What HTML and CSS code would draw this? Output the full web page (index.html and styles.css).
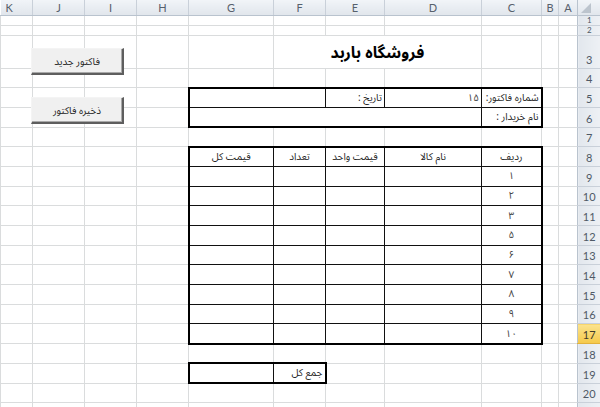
FILE: index.html
```html
<!DOCTYPE html>
<html lang="fa">
<head>
<meta charset="utf-8">
<title>فاکتور فروشگاه باربد</title>
<link rel="stylesheet" href="styles.css">
</head>
<body>
<div class="sheet">
<table class="grid" dir="rtl">
<colgroup>
<col class="c-rh"><col class="c-a"><col class="c-b"><col class="c-c"><col class="c-d"><col class="c-e"><col class="c-f"><col class="c-g"><col class="c-h"><col class="c-i"><col class="c-j"><col class="c-k">
</colgroup>
<thead>
<tr class="hdr">
<th class="corner"><span class="tri"></span></th>
<th>A</th><th>B</th><th>C</th><th>D</th><th>E</th><th>F</th><th>G</th><th>H</th><th>I</th><th>J</th><th class="k">K</th>
</tr>
</thead>
<tbody>
<tr class="r-thin"><th class="rh"><span class="clip">1</span></th><td></td><td></td><td></td><td></td><td></td><td></td><td></td><td></td><td></td><td></td><td></td></tr>
<tr class="r-thin"><th class="rh"><span class="clip">2</span></th><td></td><td></td><td></td><td></td><td></td><td></td><td></td><td></td><td></td><td></td><td></td></tr>
<tr class="r-title"><th class="rh">3</th><td></td><td></td><td></td><td colspan="3" class="title">فروشگاه باربد</td><td></td><td></td><td></td><td></td><td></td></tr>
<tr class="r"><th class="rh">4</th><td></td><td></td><td></td><td></td><td></td><td></td><td></td><td></td><td></td><td></td><td></td></tr>
<tr class="r"><th class="rh">5</th><td></td><td></td><td class="t bt br">شماره فاکتور:</td><td class="t bt num">۱۵</td><td class="t bt">تاریخ :</td><td colspan="2" class="t bt bl"></td><td></td><td></td><td></td><td></td></tr>
<tr class="r"><th class="rh">6</th><td></td><td></td><td class="t bb br">نام خریدار :</td><td colspan="4" class="t bb bl"></td><td></td><td></td><td></td><td></td></tr>
<tr class="r"><th class="rh">7</th><td></td><td></td><td></td><td></td><td></td><td></td><td></td><td></td><td></td><td></td><td></td></tr>
<tr class="r"><th class="rh">8</th><td></td><td></td><td class="t bt br ctr">ردیف</td><td class="t bt ctr">نام کالا</td><td class="t bt ctr">قیمت واحد</td><td class="t bt ctr">تعداد</td><td class="t bt bl ctr">قیمت کل</td><td></td><td></td><td></td><td></td></tr>
<tr class="r"><th class="rh">9</th><td></td><td></td><td class="t br ctr num">۱</td><td class="t"></td><td class="t"></td><td class="t"></td><td class="t bl"></td><td></td><td></td><td></td><td></td></tr>
<tr class="r"><th class="rh">10</th><td></td><td></td><td class="t br ctr num">۲</td><td class="t"></td><td class="t"></td><td class="t"></td><td class="t bl"></td><td></td><td></td><td></td><td></td></tr>
<tr class="r"><th class="rh">11</th><td></td><td></td><td class="t br ctr num">۳</td><td class="t"></td><td class="t"></td><td class="t"></td><td class="t bl"></td><td></td><td></td><td></td><td></td></tr>
<tr class="r"><th class="rh">12</th><td></td><td></td><td class="t br ctr num">۵</td><td class="t"></td><td class="t"></td><td class="t"></td><td class="t bl"></td><td></td><td></td><td></td><td></td></tr>
<tr class="r"><th class="rh">13</th><td></td><td></td><td class="t br ctr num">۶</td><td class="t"></td><td class="t"></td><td class="t"></td><td class="t bl"></td><td></td><td></td><td></td><td></td></tr>
<tr class="r"><th class="rh">14</th><td></td><td></td><td class="t br ctr num">۷</td><td class="t"></td><td class="t"></td><td class="t"></td><td class="t bl"></td><td></td><td></td><td></td><td></td></tr>
<tr class="r"><th class="rh">15</th><td></td><td></td><td class="t br ctr num">۸</td><td class="t"></td><td class="t"></td><td class="t"></td><td class="t bl"></td><td></td><td></td><td></td><td></td></tr>
<tr class="r"><th class="rh">16</th><td></td><td></td><td class="t br ctr num">۹</td><td class="t"></td><td class="t"></td><td class="t"></td><td class="t bl"></td><td></td><td></td><td></td><td></td></tr>
<tr class="r"><th class="rh active">17</th><td></td><td></td><td class="t br bb ctr num">۱۰</td><td class="t bb"></td><td class="t bb"></td><td class="t bb"></td><td class="t bb bl"></td><td></td><td></td><td></td><td></td></tr>
<tr class="r"><th class="rh">18</th><td></td><td></td><td></td><td></td><td></td><td></td><td></td><td></td><td></td><td></td><td></td></tr>
<tr class="r"><th class="rh">19</th><td></td><td></td><td></td><td></td><td></td><td class="t bt bb br">جمع کل</td><td class="t bt bb bl"></td><td></td><td></td><td></td><td></td></tr>
<tr class="r"><th class="rh">20</th><td></td><td></td><td></td><td></td><td></td><td></td><td></td><td></td><td></td><td></td><td></td></tr>
<tr class="r"><th class="rh"></th><td></td><td></td><td></td><td></td><td></td><td></td><td></td><td></td><td></td><td></td><td></td></tr>
</tbody>
</table>
<button class="btn btn-new" type="button">فاکتور جدید</button>
<button class="btn btn-save" type="button">ذخیره فاکتور</button>
</div>
</body>
</html>
```
FILE: styles.css
```css
html, body {
  margin: 0;
  padding: 0;
  background: #ffffff;
}
body {
  width: 600px;
  height: 407px;
  overflow: hidden;
  font-family: "Noto Sans Arabic", "DejaVu Sans", sans-serif;
}
.sheet {
  position: relative;
  width: 600px;
  height: 407px;
  overflow: hidden;
}
.grid {
  border-collapse: collapse;
  table-layout: fixed;
  width: 600px;
}
.c-rh { width: 23px; }
.c-a { width: 19px; }
.c-b { width: 17px; }
.c-c { width: 60px; }
.c-d { width: 97px; }
.c-e { width: 59px; }
.c-f { width: 52px; }
.c-g { width: 85px; }
.c-h { width: 52px; }
.c-i { width: 52px; }
.c-j { width: 52px; }
.c-k { width: 32px; }

.grid td {
  border: 1px solid #dadcdd;
  padding: 0 2px;
  font-size: 10px;
  line-height: 12px;
  color: #262626;
  white-space: nowrap;
  overflow: hidden;
  vertical-align: middle;
  text-align: right;
}

.hdr { height: 15px; }
.r-thin { height: 10px; }
.r-title { height: 33px; }
.r { height: 19.7px; }

.hdr th {
  background: linear-gradient(#f1f4f8, #e1e6ec);
  border-left: 1px solid #c9d0d9;
  border-bottom: 1px solid #b9c3ce;
  font-family: "Lato", "Liberation Sans", sans-serif;
  font-weight: normal;
  font-size: 11px;
  line-height: 13px;
  color: #56606c;
  padding: 0;
  text-align: center;
  vertical-align: middle;
}
.hdr th.k {
  text-align: left;
  padding-left: 5px;
  border-left: none;
}
.hdr th.corner {
  position: relative;
  border-left: 1px solid #b9c3ce;
}
.tri {
  position: absolute;
  left: 3px;
  bottom: 2px;
  width: 0;
  height: 0;
  border-style: solid;
  border-width: 0 0 10px 10px;
  border-color: transparent transparent #bcc4cd transparent;
}

.grid th.rh {
  background: linear-gradient(90deg, #e2e7ed, #eef1f5);
  border-left: 1px solid #b9c3ce;
  border-bottom: 1px solid #c9d0d9;
  font-family: "Lato", "Liberation Sans", sans-serif;
  font-weight: normal;
  font-size: 11px;
  line-height: 12px;
  color: #4f5966;
  padding: 0 0 2px 0;
  text-align: center;
  vertical-align: bottom;
  overflow: hidden;
}
.grid .r-thin th.rh {
  padding: 0;
  font-size: 8px;
  vertical-align: middle;
}
.clip {
  display: block;
  height: 9px;
  line-height: 9px;
}
.grid th.rh.active {
  background: linear-gradient(#fbe38e, #f5c94a);
  color: #3f3a2a;
  border-bottom-color: #e2b23c;
}

.grid td.title {
  font-size: 16px;
  line-height: 20px;
  font-weight: bold;
  color: #000;
  text-align: center;
  vertical-align: middle;
  padding: 2px 0 0 0;
}

.grid td.t { border: 1px solid #111; }
.grid td.bt { border-top: 2px solid #000; }
.grid td.bb { border-bottom: 2px solid #000; }
.grid td.bl { border-left: 2px solid #000; }
.grid td.br { border-right: 2px solid #000; }
.grid td.ctr { text-align: center; }
.grid td.num { color: #444; }

.btn {
  position: absolute;
  left: 31px;
  width: 93px;
  height: 27px;
  padding: 0;
  margin: 0;
  background: #f0f0f0;
  border-top: 1px solid #f4f4f4;
  border-left: 1px solid #f4f4f4;
  border-right: 2px solid #5e5e5e;
  border-bottom: 2px solid #5e5e5e;
  box-shadow: inset -1px -1px 0 #a9a9a9;
  font-family: "Noto Sans Arabic", "DejaVu Sans", sans-serif;
  font-size: 10px;
  color: #1e1e1e;
  direction: rtl;
  text-align: center;
}
.btn-new { top: 48px; }
.btn-save { top: 97px; }
```
